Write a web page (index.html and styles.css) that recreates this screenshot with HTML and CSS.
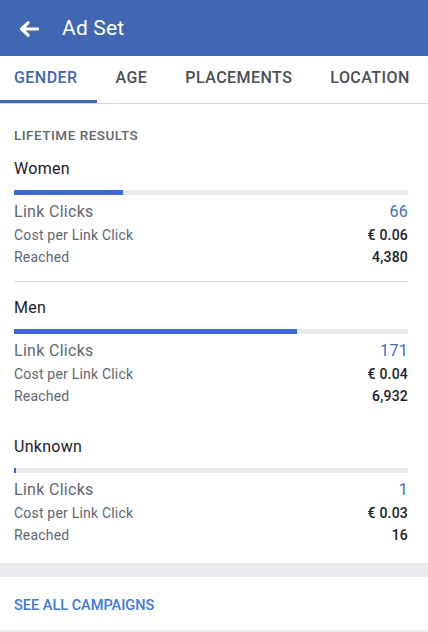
FILE: index.html
```html
<!DOCTYPE html>
<html lang="en">
<head>
  <meta charset="UTF-8">
  <title>Ad Set</title>
  <link rel="stylesheet" href="styles.css">
</head>
<body>
  <header class="app-bar">
    <svg class="back" width="20" height="16" viewBox="0 0 20 16" aria-hidden="true">
      <path d="M19 8H3.5M9 1.8L2.6 8 9 14.2" fill="none" stroke="#fff" stroke-width="3.2" stroke-linecap="round" stroke-linejoin="round"/>
    </svg>
    <h1 class="title">Ad Set</h1>
  </header>

  <nav class="tabs">
    <div class="tab active">GENDER</div>
    <div class="tab">AGE</div>
    <div class="tab">PLACEMENTS</div>
    <div class="tab">LOCATION</div>
  </nav>

  <main class="results">
    <h2 class="results-title">LIFETIME RESULTS</h2>

    <section class="group divided">
      <div class="group-name">Women</div>
      <div class="bar"><div class="bar-fill" style="width: 27.7%"></div></div>
      <div class="row main"><span>Link Clicks</span><span class="clicks">66</span></div>
      <div class="row"><span>Cost per Link Click</span><b>€ 0.06</b></div>
      <div class="row"><span>Reached</span><b>4,380</b></div>
    </section>

    <section class="group">
      <div class="group-name">Men</div>
      <div class="bar"><div class="bar-fill" style="width: 71.8%"></div></div>
      <div class="row main"><span>Link Clicks</span><span class="clicks">171</span></div>
      <div class="row"><span>Cost per Link Click</span><b>€ 0.04</b></div>
      <div class="row"><span>Reached</span><b>6,932</b></div>
    </section>

    <section class="group last">
      <div class="group-name">Unknown</div>
      <div class="bar"><div class="bar-fill" style="width: 0.6%"></div></div>
      <div class="row main"><span>Link Clicks</span><span class="clicks">1</span></div>
      <div class="row"><span>Cost per Link Click</span><b>€ 0.03</b></div>
      <div class="row"><span>Reached</span><b>16</b></div>
    </section>
  </main>

  <div class="footer">
    <a class="see-all" href="#">SEE ALL CAMPAIGNS</a>
  </div>
</body>
</html>
```

FILE: styles.css
```css
body {
  margin: 0;
  font-family: Roboto, "Liberation Sans", sans-serif;
  background: #e9ebee;
  color: #1d2129;
}
.app-bar {
  height: 56px;
  background: #4267b2;
  display: flex;
  align-items: center;
  padding-left: 19px;
}
.back {
  display: block;
  margin-top: 1px;
}
.title {
  margin: 0 0 0 23px;
  font-size: 21px;
  font-weight: 400;
  color: #fff;
  line-height: 24px;
  padding-bottom: 1px;
  letter-spacing: 0.2px;
}
.tabs {
  display: flex;
  height: 47px;
  background: #fff;
  border-bottom: 1px solid #d6d8dc;
}
.tab {
  padding: 0 19px;
  font-size: 16px;
  font-weight: 500;
  letter-spacing: 0.45px;
  color: #4b4f56;
  line-height: 43px;
  white-space: nowrap;
  box-sizing: border-box;
  height: 47px;
}
.tab:first-child {
  padding-left: 14px;
}
.tab.active {
  color: #4267b2;
  border-bottom: 3px solid #4267b2;
}
.results {
  background: #fff;
  padding: 23px 20px 4px 14px;
}
.results-title {
  margin: 0;
  font-size: 13.5px;
  font-weight: 500;
  letter-spacing: 0.5px;
  line-height: 16px;
  color: #606770;
}
.group {
  padding: 16px 0 15px;
  border-bottom: 1px solid transparent;
}
.group.divided {
  border-bottom-color: #dadde1;
}
.group.last {
  border-bottom: 0;
}
.group-name {
  font-size: 16px;
  line-height: 20px;
  letter-spacing: 0.3px;
  color: #1d2129;
}
.bar {
  height: 5px;
  margin: 11px 0 7px;
  background: #e9ebee;
}
.bar-fill {
  height: 100%;
  background: #3b68d6;
}
.row {
  display: flex;
  justify-content: space-between;
  font-size: 14px;
  line-height: 18px;
  letter-spacing: 0.2px;
  color: #606770;
  margin-top: 4px;
}
.row.main {
  font-size: 16px;
  line-height: 20px;
  letter-spacing: 0.3px;
  margin-top: 0;
}
.row b {
  font-weight: 500;
  color: #1d2129;
}
.clicks {
  color: #3d6ccf;
}
.footer {
  margin-top: 14px;
  background: #fff;
  padding: 20px 14px 16px;
  line-height: 16px;
}
.see-all {
  font-size: 14.5px;
  font-weight: 500;
  color: #3d78dd;
  text-decoration: none;
}
```
